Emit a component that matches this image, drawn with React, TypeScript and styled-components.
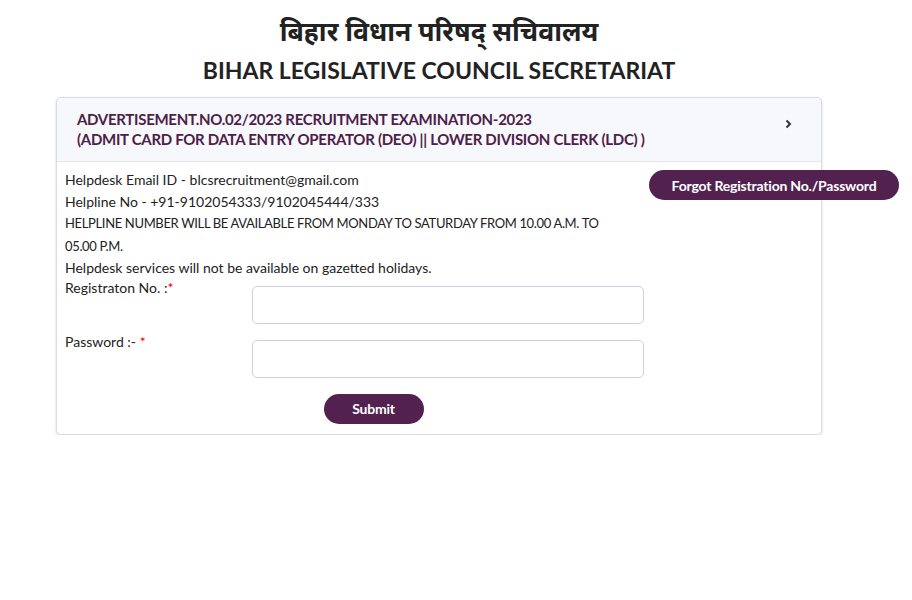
import React from 'react';
import styled, { createGlobalStyle } from 'styled-components';

const GlobalStyle = createGlobalStyle`
  body {
    margin: 0;
    background: #fff;
    font-family: Lato, "Noto Sans", "Liberation Sans", sans-serif;
    color: #212529;
  }
`;

const Page = styled.div`
  width: 766px;
  margin: 0 0 0 56px;
  padding-top: 11px;
`;

const HindiTitle = styled.h1`
  margin: 0;
  text-align: center;
  font-family: "Noto Sans", "Noto Sans Devanagari", "Lohit Devanagari", sans-serif;
  font-size: 26.5px;
  font-weight: 700;
  line-height: 40px;
  color: #222;
`;

const EnglishTitle = styled.h2`
  margin: 4px 0 12px;
  text-align: center;
  font-size: 23px;
  font-weight: 700;
  line-height: 30px;
  color: #222;
`;

const Card = styled.div`
  border: 1px solid #dcdcdc;
  border-radius: 5px;
  box-shadow: 0 1px 3px rgba(0, 0, 0, 0.15);
  background: #fff;
`;

const CardHeader = styled.div`
  display: flex;
  align-items: flex-start;
  justify-content: space-between;
  padding: 12px 26px 12px 20px;
  background: #f7f8fc;
  border-bottom: 1px solid #e6e6ea;
  border-radius: 5px 5px 0 0;
`;

const HeaderText = styled.div`
  font-size: 15px;
  font-weight: 700;
  line-height: 19.5px;
  letter-spacing: -0.3px;
  color: #4d2147;
`;

const Chevron = styled.svg`
  margin-top: 9px;
  margin-right: 3px;
  flex: none;
`;

const CardBody = styled.div`
  display: grid;
  grid-template-columns: 583px 1fr;
  padding: 7px 8px 10px 8px;
`;

const InfoText = styled.div`
  font-size: 14px;
  line-height: 21.5px;
  color: #222;
`;

const Caps = styled.span`
  font-size: 13px;
  letter-spacing: -0.35px;
`;

const Side = styled.div`
  padding: 1px 0 0 1px;
`;

const PillButton = styled.button<{ $width: number }>`
  width: ${(p) => p.$width}px;
  height: 30px;
  border: none;
  border-radius: 15px;
  background: #52214f;
  color: #fff;
  font-family: inherit;
  font-size: 14px;
  font-weight: 700;
  letter-spacing: -0.2px;
  cursor: pointer;
`;

const FormRow = styled.div`
  display: grid;
  grid-template-columns: 187px 392px;
  align-items: start;
  margin-top: -1px;
  & + & {
    margin-top: 8px;
  }
`;

const Label = styled.label`
  font-size: 14px;
  line-height: 20px;
  color: #222;
`;

const Star = styled.span`
  color: #e00;
`;

const Input = styled.input`
  height: 38px;
  margin-top: 8px;
  box-sizing: border-box;
  border: 1px solid #cfd0e0;
  border-radius: 5px;
  font-size: 14px;
  padding: 0 10px;
`;

const SubmitWrap = styled.div`
  display: flex;
  justify-content: center;
  padding-left: 34px;
  margin-top: 16px;
`;

export default function App() {
  return (
    <>
      <GlobalStyle />
      <Page>
        <HindiTitle>बिहार विधान परिषद् सचिवालय</HindiTitle>
        <EnglishTitle>BIHAR LEGISLATIVE COUNCIL SECRETARIAT</EnglishTitle>
        <Card>
          <CardHeader>
            <HeaderText>
              ADVERTISEMENT.NO.02/2023 RECRUITMENT EXAMINATION-2023
              <br />
              (ADMIT CARD FOR DATA ENTRY OPERATOR (DEO) || LOWER DIVISION CLERK (LDC) )
            </HeaderText>
            <Chevron width="7" height="10" viewBox="0 0 7 10">
              <polyline points="1.5,1.5 5,5 1.5,8.5" fill="none" stroke="#333" strokeWidth="2" />
            </Chevron>
          </CardHeader>
          <CardBody>
            <div>
              <InfoText>
                Helpdesk Email ID - blcsrecruitment@gmail.com
                <br />
                Helpline No - +91-9102054333/9102045444/333
                <br />
                <Caps>HELPLINE NUMBER WILL BE AVAILABLE FROM MONDAY TO SATURDAY FROM 10.00 A.M. TO</Caps>
                <br />
                <Caps>05.00 P.M.</Caps>
                <br />
                Helpdesk services will not be available on gazetted holidays.
              </InfoText>
              <FormRow>
                <Label>
                  Registraton No. :<Star>*</Star>
                </Label>
                <Input type="text" />
              </FormRow>
              <FormRow>
                <Label>
                  Password :- <Star>*</Star>
                </Label>
                <Input type="password" />
              </FormRow>
              <SubmitWrap>
                <PillButton $width={100}>Submit</PillButton>
              </SubmitWrap>
            </div>
            <Side>
              <PillButton $width={250}>Forgot Registration No./Password</PillButton>
            </Side>
          </CardBody>
        </Card>
      </Page>
    </>
  );
}
